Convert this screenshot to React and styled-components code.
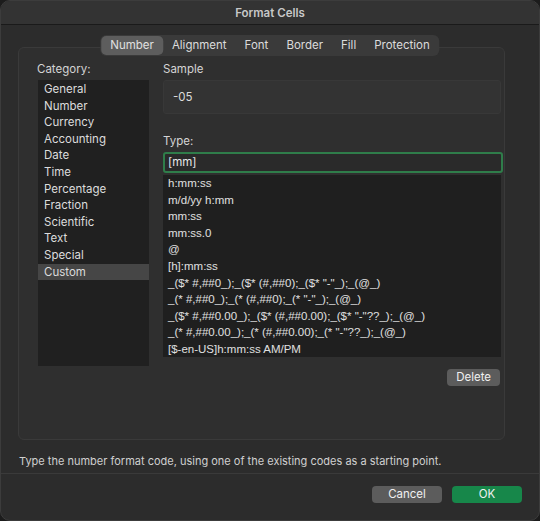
import React from 'react';
import styled, { createGlobalStyle } from 'styled-components';

const Global = createGlobalStyle`
  html, body { margin: 0; background: #1c1c1c; }
  body { font-family: Inter, "Liberation Sans", sans-serif; font-size: 11.5px; color: #dcdcdc; }
`;

const Window = styled.div`
  width: 540px;
  height: 521px;
  background: #2c2c2c;
  border-radius: 10px;
  overflow: hidden;
  display: flex;
  flex-direction: column;
  box-sizing: border-box;
  border: 1px solid #3c3c3c;
`;

const TitleBar = styled.div`
  height: 23px;
  flex: none;
  background: #333;
  border-bottom: 1px solid #1a1a1a;
  display: flex;
  align-items: center;
  justify-content: center;
  font-weight: 600;
  font-size: 11.5px;
  color: #c8c8c8;
`;

const Body = styled.div`
  padding: 12px 17px 0 17px;
  flex: 1;
  display: flex;
  flex-direction: column;
  position: relative;
`;

const Tabs = styled.div`
  position: absolute;
  top: 10px;
  left: 269px;
  transform: translateX(-50%);
  display: flex;
  background: #3a3a3a;
  border-radius: 6px;
  padding: 1px;
  z-index: 1;
`;

const Tab = styled.div`
  padding: 2px 9px 3px;
  font-size: 11.5px;
  border-radius: 5px;
  color: ${p => (p.$active ? '#e0e0e0' : '#dcdcdc')};
  background: ${p => (p.$active ? '#5d5d5d' : 'transparent')};
`;

const Group = styled.div`
  margin-top: 10px;
  margin-right: 17px;
  height: 393px;
  border: 1px solid #3a3a3a;
  background: #2f2f2f;
  border-radius: 6px;
  display: flex;
  gap: 14px;
  padding: 14px 4px 0 18px;
  box-sizing: border-box;
`;

const Column = styled.div`
  display: flex;
  flex-direction: column;
  width: ${p => p.$w || 'auto'};
  flex: ${p => (p.$grow ? 1 : 'none')};
`;

const Label = styled.div`
  font-size: 11.5px;
  color: #d4d4d4;
  margin-bottom: ${p => p.$mb || 5}px;
`;

const CatList = styled.div`
  background: #202020;
  height: 285px;
  margin-left: 1px;
  padding-top: 1px;
  display: flex;
  flex-direction: column;
`;

const CatItem = styled.div`
  height: 16.6px;
  line-height: 16.6px;
  padding-left: 6px;
  background: ${p => (p.$sel ? '#464646' : 'transparent')};
`;

const SampleBox = styled.div`
  height: 34px;
  border: 1px solid #383838;
  border-radius: 3px;
  background: #333;
  display: flex;
  align-items: center;
  padding-left: 9px;
  margin-bottom: 20px;
  width: 338px;
  box-sizing: border-box;
`;

const Input = styled.div`
  height: 21px;
  width: 340px;
  box-sizing: border-box;
  border: 2px solid #2f7d4a;
  border-radius: 3px;
  background: #2a2a2a;
  padding-left: 3px;
  line-height: 17px;
  color: #e8e8e8;
`;

const TypeList = styled.div`
  margin-top: 2px;
  width: 338px;
  height: 182px;
  background: #1f1f1f;
  padding: 0 0 0 5px;
  box-sizing: border-box;
  overflow: hidden;
  font-family: "Liberation Sans", Arial, sans-serif;
`;

const TypeItem = styled.div`
  height: 16.6px;
  line-height: 16.6px;
  white-space: nowrap;
  font-size: 11.5px;
  color: #e0e0e0;
`;

const Row = styled.div`
  display: flex;
  justify-content: flex-end;
  gap: ${p => p.$gap || 0}px;
  margin-top: ${p => p.$mt || 0}px;
  padding-right: ${p => p.$pr || 0}px;
`;

const Button = styled.div`
  height: 17px;
  line-height: 17px;
  padding: 0 ${p => p.$px || 8}px;
  min-width: ${p => p.$min || 0}px;
  text-align: center;
  border-radius: 4px;
  font-size: 11.5px;
  background: ${p => (p.$primary ? '#17874a' : '#5c5c5c')};
  color: #f0f0f0;
`;

const Hint = styled.div`
  margin-top: 14px;
  font-size: 11px;
  color: #d0d0d0;
  padding-bottom: 5px;
  border-bottom: 1px solid #3a3a3a;
  margin-left: -17px;
  margin-right: -17px;
  padding-left: 18px;
`;

const cats = ['General', 'Number', 'Currency', 'Accounting', 'Date', 'Time', 'Percentage', 'Fraction', 'Scientific', 'Text', 'Special', 'Custom'];
const types = [
  'h:mm:ss',
  'm/d/yy h:mm',
  'mm:ss',
  'mm:ss.0',
  '@',
  '[h]:mm:ss',
  '_($* #,##0_);_($* (#,##0);_($* "-"_);_(@_)',
  '_(* #,##0_);_(* (#,##0);_(* "-"_);_(@_)',
  '_($* #,##0.00_);_($* (#,##0.00);_($* "-"??_);_(@_)',
  '_(* #,##0.00_);_(* (#,##0.00);_(* "-"??_);_(@_)',
  '[$-en-US]h:mm:ss AM/PM',
];
const tabs = ['Number', 'Alignment', 'Font', 'Border', 'Fill', 'Protection'];

export default function App() {
  return (
    <Window>
      <Global />
      <TitleBar>Format Cells</TitleBar>
      <Body>
        <Tabs>
          {tabs.map((t, i) => <Tab key={t} $active={i === 0}>{t}</Tab>)}
        </Tabs>
        <Group>
          <Column $w="112px">
            <Label $mb={4}>Category:</Label>
            <CatList>
              {cats.map(c => <CatItem key={c} $sel={c === 'Custom'}>{c}</CatItem>)}
            </CatList>
          </Column>
          <Column $grow>
            <Label $mb={4}>Sample</Label>
            <SampleBox>-05</SampleBox>
            <Label $mb={4}>Type:</Label>
            <Input>[mm]</Input>
            <TypeList>
              {types.map(t => <TypeItem key={t}>{t}</TypeItem>)}
            </TypeList>
            <Row $mt={12} $pr={3}>
              <Button $px={9}>Delete</Button>
            </Row>
          </Column>
        </Group>
        <Hint>Type the number format code, using one of the existing codes as a starting point.</Hint>
        <Row $mt={12} $gap={10} $pr={0}>
          <Button $min={54} $px={0}>Cancel</Button>
          <Button $primary $min={54} $px={0}>OK</Button>
        </Row>
      </Body>
    </Window>
  );
}
